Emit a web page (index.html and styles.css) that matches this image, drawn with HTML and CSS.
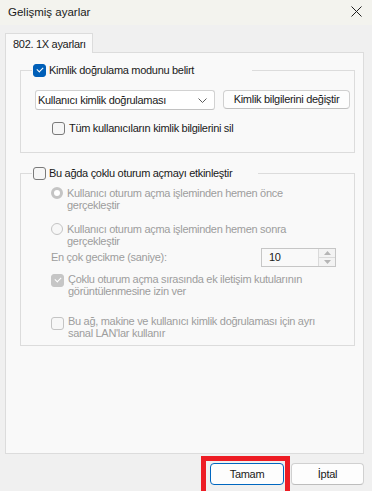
FILE: index.html
```html
<!DOCTYPE html>
<html lang="tr">
<head>
<meta charset="utf-8">
<link rel="stylesheet" href="styles.css">
</head>
<body>
<div class="titlebar">
  <span class="title">Gelişmiş ayarlar</span>
  <svg class="close" width="11" height="11" viewBox="0 0 11 11"><path d="M0.5 0.5 L10.5 10.5 M10.5 0.5 L0.5 10.5" stroke="#1f1f1f" stroke-width="1" fill="none"/></svg>
</div>
<div class="tabs">
  <div class="tab">802. 1X ayarları</div>
</div>
<div class="panel">
  <fieldset class="group">
    <legend class="legend legend-1"><span class="cb checked"></span><span class="lbl">Kimlik doğrulama modunu belirt</span></legend>
    <div class="row-combo">
      <div class="combo"><span>Kullanıcı kimlik doğrulaması</span><svg width="9" height="5" viewBox="0 0 9 5"><path d="M0.5 0.5 L4.5 4.5 L8.5 0.5" stroke="#5c5c5c" fill="none"/></svg></div>
      <div class="btn">Kimlik bilgilerini değiştir</div>
    </div>
    <div class="check-row indent1"><span class="cb"></span><span class="lbl">Tüm kullanıcıların kimlik bilgilerini sil</span></div>
  </fieldset>

  <fieldset class="group group-2">
    <legend class="legend legend-2"><span class="cb"></span><span class="lbl">Bu ağda çoklu oturum açmayı etkinleştir</span></legend>
    <div class="opt first">
      <span class="radio on"></span>
      <span class="txt dis">Kullanıcı oturum açma işleminden hemen önce<br>gerçekleştir</span>
    </div>
    <div class="opt second">
      <span class="radio"></span>
      <span class="txt dis">Kullanıcı oturum açma işleminden hemen sonra<br>gerçekleştir</span>
    </div>
    <div class="delay">
      <span class="dis">En çok gecikme (saniye):</span>
      <div class="spin">
        <span class="spin-val">10</span>
        <div class="spin-btns">
          <div class="spin-b"><svg width="7" height="4" viewBox="0 0 7 4"><path d="M0 4 L3.5 0 L7 4Z" fill="#b5b5b5"/></svg></div>
          <div class="spin-b"><svg width="7" height="4" viewBox="0 0 7 4"><path d="M0 0 L3.5 4 L7 0Z" fill="#b5b5b5"/></svg></div>
        </div>
      </div>
    </div>
    <div class="opt opt-cb third">
      <span class="cb dis-checked"></span>
      <span class="txt dis">Çoklu oturum açma sırasında ek iletişim kutularının<br>görüntülenmesine izin ver</span>
    </div>
    <div class="opt opt-cb last">
      <span class="cb dis-cb"></span>
      <span class="txt dis">Bu ağ, makine ve kullanıcı kimlik doğrulaması için ayrı<br>sanal LAN'lar kullanır</span>
    </div>
  </fieldset>
</div>
<div class="buttons">
  <span class="highlight"><span class="pbtn default">Tamam</span></span>
  <span class="pbtn">İptal</span>
</div>
</body>
</html>
```

FILE: styles.css
```css
* { box-sizing: border-box; }
html, body { margin: 0; padding: 0; }
body {
  width: 372px;
  height: 491px;
  overflow: hidden;
  background: #f0f0f0;
  font-family: "Liberation Sans", Arial, sans-serif;
  font-size: 11px;
  letter-spacing: -0.3px;
  line-height: 13px;
  color: #1a1a1a;
  white-space: nowrap;
}
.titlebar {
  height: 25px;
  background: #f3f3ee;
  display: flex;
  align-items: center;
  justify-content: space-between;
  padding: 0 10px 0 8px;
}
.title {
  font-size: 11.5px;
  letter-spacing: 0;
  color: #1a1a1a;
}
.close { display: block; margin-top: -2px; }
.tabs {
  padding: 8px 0 0 5px;
  display: flex;
}
.tab {
  width: 88px;
  height: 20px;
  margin-bottom: -1px;
  position: relative;
  z-index: 1;
  background: #f9f9f9;
  border: 1px solid #dcdcdc;
  border-bottom: none;
  padding: 4px 0 0 7px;
}
.panel {
  margin-left: 5px;
  width: 359px;
  height: 402px;
  background: #f9f9f9;
  border: 1px solid #dcdcdc;
  padding: 11px 8px 0 14px;
}
.group {
  margin: 0;
  padding: 13px 0 17px 14px;
  border: 1px solid #dcdcdc;
  min-width: 0;
}
.group-2 {
  margin-top: 14px;
  padding-top: 7px;
  padding-bottom: 6px;
}
.legend {
  display: flex;
  align-items: center;
  height: 13px;
  padding: 0;
  margin-left: -3px;
}
.legend-1 { width: 220px; }
.legend-2 { width: 226px; }
.legend .cb { margin-left: 1px; margin-right: 3px; }
.cb {
  display: inline-block;
  flex: none;
  width: 13px;
  height: 13px;
  border: 1px solid #7a7a7a;
  border-radius: 3px;
  background: #f6f6f6;
  position: relative;
}
.cb.checked {
  background: #005fb8;
  border-color: #005fb8;
}
.cb.checked::after, .cb.dis-checked::after {
  content: "";
  position: absolute;
  left: 3px;
  top: 2px;
  width: 5px;
  height: 3px;
  border-left: 1px solid #fff;
  border-bottom: 1px solid #fff;
  transform: rotate(-45deg);
  transform-origin: center;
}
.cb.dis-checked {
  background: #c6c6c6;
  border-color: #c6c6c6;
}
.cb.dis-cb {
  border-color: #c4c4c4;
  background: #f7f7f7;
}
.row-combo {
  display: flex;
  align-items: flex-start;
  gap: 8px;
}
.combo {
  width: 180px;
  height: 20px;
  background: #fff;
  border: 1px solid #d2d2d2;
  border-bottom-color: #c2c2c2;
  border-radius: 3px;
  display: flex;
  align-items: center;
  justify-content: space-between;
  padding: 0 7px 0 2px;
}
.combo svg { display: block; }
.btn {
  width: 127px;
  height: 19px;
  background: #fdfdfd;
  border: 1px solid #d0d0d0;
  border-bottom-color: #c0c0c0;
  border-radius: 4px;
  display: flex;
  align-items: center;
  justify-content: center;
}
.check-row {
  display: flex;
  align-items: center;
  margin-top: 12px;
}
.indent1 { padding-left: 17px; }
.check-row .cb { margin-right: 4px; }
.opt {
  display: flex;
  align-items: flex-start;
  padding-left: 16px;
}
.opt .radio, .opt .cb { margin-right: 4px; }
.opt.first { margin-top: 0; }
.opt.second { margin-top: 12px; }
.opt.third { margin-top: 6px; }
.opt.third .cb { margin-top: 1px; }
.opt.last { margin-top: 18px; }
.opt.last .cb { margin-top: 2px; }
.txt { display: block; line-height: 12px; }
.dis { color: #9d9d9d; }
.radio {
  display: inline-block;
  flex: none;
  width: 12px;
  height: 12px;
  border-radius: 50%;
  border: 1px solid #c4c4c4;
  background: #f7f7f7;
}
.radio.on {
  border: 3px solid #c4c4c4;
  background: #fff;
}
.delay {
  display: flex;
  align-items: center;
  justify-content: space-between;
  padding-left: 16px;
  padding-right: 18px;
  margin-top: 1px;
  height: 19px;
}
.spin {
  width: 75px;
  height: 19px;
  border: 1px solid #c6c6c6;
  background: #f9f9f9;
  display: flex;
  align-items: center;
  justify-content: space-between;
}
.spin-val { padding-left: 7px; color: #1a1a1a; }
.spin-btns {
  width: 17px;
  height: 17px;
  display: flex;
  flex-direction: column;
  border-left: 1px solid #dadada;
}
.spin-b {
  flex: 1;
  display: flex;
  align-items: center;
  justify-content: center;
  background: #f3f3f3;
}
.spin-b + .spin-b { border-top: 1px solid #dadada; }
.spin-b svg { display: block; }
.buttons {
  display: flex;
  justify-content: flex-end;
  align-items: flex-start;
  gap: 1px;
  padding: 2px 8px 0 0;
}
.highlight {
  display: block;
  border: 5px solid #ed1c24;
  border-bottom: none;
  padding: 2px 1px 10px 4px;
}
.pbtn {
  display: flex;
  align-items: center;
  justify-content: center;
  width: 73px;
  height: 22px;
  margin-top: 7px;
  background: #fdfdfd;
  border: 1px solid #d0d0d0;
  border-bottom-color: #bdbdbd;
  border-radius: 4px;
}
.highlight .pbtn { margin-top: 0; width: 74px; }
.pbtn.default {
  border: 1px solid #0067c0;
  box-shadow: inset 0 0 0 1px #fdfdfd;
}
```
